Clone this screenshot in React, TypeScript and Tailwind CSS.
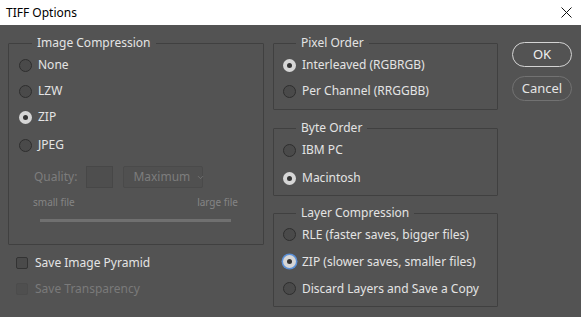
import { ChevronDown } from 'lucide-react';

function Radio({ label, checked = false, focus = false, className = '' }: { label: string; checked?: boolean; focus?: boolean; className?: string }) {
  return (
    <div className={`flex items-center gap-[6px] ${className}`}>
      {checked ? (
        <span
          className={`flex h-[13px] w-[13px] items-center justify-center rounded-full bg-[#d6d6d6] ${
            focus ? 'ring-[1.5px] ring-[#5a8fd6]' : ''
          }`}
        >
          <span className="h-[5px] w-[5px] rounded-full bg-[#333333]" />
        </span>
      ) : (
        <span className="h-[13px] w-[13px] rounded-full border border-[#2e2e2e] bg-[#4a4a4a]" />
      )}
      <span className="text-[12px] text-[#e4e4e4]">{label}</span>
    </div>
  );
}

function Group({ title, className = '', children }: { title: string; className?: string; children: React.ReactNode }) {
  return (
    <fieldset className={`rounded-[1px] border border-[#404040] ${className}`}>
      <legend className="ml-[13px] h-[16px] px-[5px] text-[12px] leading-[16px] text-[#e4e4e4]">{title}</legend>
      {children}
    </fieldset>
  );
}

export default function App() {
  return (
    <div className="flex h-[317px] w-[581px] flex-col overflow-hidden bg-[#535353] font-['Noto_Sans',sans-serif]">
      {/* title bar */}
      <div className="flex h-[25px] shrink-0 items-center justify-between bg-white pl-[6px] pr-[8px]">
        <span className="text-[12px] text-black">TIFF Options</span>
        <svg width="11" height="11" viewBox="0 0 11 11" className="mr-[1px]">
          <path d="M0.5 0.5 L10.5 10.5 M10.5 0.5 L0.5 10.5" stroke="#111" strokeWidth="1" />
        </svg>
      </div>

      <div className="flex pt-[10px]">
        {/* left column */}
        <div className="ml-[8px] flex w-[256px] flex-col">
          <Group title="Image Compression" className="h-[210px] pl-[10px]">
            <div className="flex flex-col pt-[1px]">
              <Radio label="None" className="h-[26px]" />
              <Radio label="LZW" className="h-[26px]" />
              <Radio label="ZIP" checked className="h-[26px]" />
              <Radio label="JPEG" className="mt-[2px] h-[26px]" />
            </div>
            <div className="ml-[15px] mt-[8px] flex items-center">
              <span className="text-[12px] text-[#7d7d7d]">Quality:</span>
              <span className="ml-[9px] h-[22px] w-[27px] border border-[#474747] bg-[#4e4e4e]" />
              <span className="ml-[10px] flex h-[22px] w-[80px] items-center gap-[6px] rounded-[2px] border border-[#4a4a4a] bg-[#505050] pl-[9px] text-[12px] text-[#7d7d7d]">
                <span>Maximum</span>
                <ChevronDown size={9} strokeWidth={1.5} color="#858585" className="shrink-0" />
              </span>
            </div>
            <div className="ml-[14px] mr-[25px] mt-[4px] flex justify-between text-[10px] leading-[20px] text-[#858585]">
              <span>small file</span>
              <span>large file</span>
            </div>
            <div className="ml-[21px] mr-[32px] mt-[7px] h-[3px] bg-[#707070]" />
          </Group>

          <div className="ml-[8px] mt-[5px] flex flex-col">
            <div className="flex h-[26px] items-center gap-[7px]">
              <span className="h-[12px] w-[12px] rounded-[2px] border border-[#333333] bg-[#4a4a4a]" />
              <span className="text-[12px] text-[#e4e4e4]">Save Image Pyramid</span>
            </div>
            <div className="flex h-[26px] items-center gap-[7px]">
              <span className="h-[12px] w-[12px] rounded-[2px] border border-[#4c4c4c] bg-[#4f4f4f]" />
              <span className="text-[12px] text-[#7a7a7a]">Save Transparency</span>
            </div>
          </div>
        </div>

        {/* right column */}
        <div className="ml-[9px] flex w-[225px] flex-col">
          <Group title="Pixel Order" className="h-[75px] pl-[9px]">
            <div className="flex flex-col pt-[1px]">
              <Radio label="Interleaved (RGBRGB)" checked className="h-[26px]" />
              <Radio label="Per Channel (RRGGBB)" className="h-[26px]" />
            </div>
          </Group>
          <Group title="Byte Order" className="mt-[10px] h-[76px] pl-[9px]">
            <div className="flex flex-col pt-[1px]">
              <Radio label="IBM PC" className="h-[26px]" />
              <Radio label="Macintosh" checked className="mt-[2px] h-[26px]" />
            </div>
          </Group>
          <Group title="Layer Compression" className="mt-[9px] h-[102px] pl-[9px]">
            <div className="flex flex-col">
              <Radio label="RLE (faster saves, bigger files)" className="h-[27px]" />
              <Radio label="ZIP (slower saves, smaller files)" checked focus className="h-[27px]" />
              <Radio label="Discard Layers and Save a Copy" className="h-[27px]" />
            </div>
          </Group>
        </div>

        {/* buttons */}
        <div className="ml-[14px] flex w-[60px] flex-col gap-[9px] pt-[7px]">
          <button className="h-[25px] w-[60px] rounded-full border-[1.5px] border-[#d4d4d4] text-[13px] leading-none text-[#f0f0f0]">
            OK
          </button>
          <button className="h-[25px] w-[60px] rounded-full border border-[#727272] text-[13px] leading-none text-[#e4e4e4]">
            Cancel
          </button>
        </div>
      </div>
    </div>
  );
}
